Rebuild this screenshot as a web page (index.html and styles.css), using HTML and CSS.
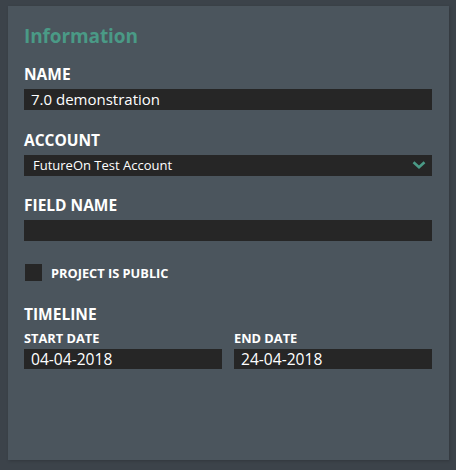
FILE: index.html
```html
<!DOCTYPE html>
<html>
<head>
<meta charset="utf-8">
<link rel="stylesheet" href="styles.css">
</head>
<body>
<div class="panel">
  <h2 class="title">Information</h2>

  <div class="field">
    <div class="label">NAME</div>
    <div class="input">7.0 demonstration</div>
  </div>

  <div class="field">
    <div class="label">ACCOUNT</div>
    <div class="input select">
      <span class="select-text">FutureOn Test Account</span>
      <svg class="chevron" width="14" height="8" viewBox="0 0 14 8"><path d="M1.5 1.2 L7 6.2 L12.5 1.2" fill="none" stroke="#4a9a86" stroke-width="2.6"/></svg>
    </div>
  </div>

  <div class="field">
    <div class="label">FIELD NAME</div>
    <div class="input"></div>
  </div>

  <div class="check-row">
    <span class="checkbox"></span>
    <span class="check-label">PROJECT IS PUBLIC</span>
  </div>

  <div class="timeline">
    <div class="label">TIMELINE</div>
    <div class="dates">
      <div class="date">
        <div class="sublabel">START DATE</div>
        <div class="input date-input">04-04-2018</div>
      </div>
      <div class="date">
        <div class="sublabel">END DATE</div>
        <div class="input date-input">24-04-2018</div>
      </div>
    </div>
  </div>
</div>
</body>
</html>
```

FILE: styles.css
```css
html, body {
  margin: 0;
  padding: 0;
  background: #3c434a;
  width: 456px;
  height: 470px;
  overflow: hidden;
}
body {
  padding: 6px 0 0 8px;
  box-sizing: border-box;
  font-family: "Open Sans", "Noto Sans", sans-serif;
  color: #ffffff;
}
.panel {
  width: 441px;
  height: 454px;
  box-sizing: border-box;
  background: #4b555d;
  padding: 18px 17px 0 16px;
  box-shadow: 1px 1px 3px rgba(0,0,0,0.18);
}
.title {
  margin: 0;
  font-size: 19px;
  line-height: 24px;
  font-weight: 700;
  color: #4a9a86;
  letter-spacing: -0.1px;
}
.field {
  margin-top: 17px;
}
.field + .field {
  margin-top: 20.5px;
}
.label {
  font-size: 15.5px;
  line-height: 18px;
  font-weight: 700;
  color: #ffffff;
}
.input {
  margin-top: 6px;
  height: 21px;
  background: #262626;
  box-sizing: border-box;
  padding: 0 7px;
  font-size: 15px;
  line-height: 21px;
  color: #ffffff;
  white-space: nowrap;
}
.select {
  display: flex;
  align-items: center;
  justify-content: space-between;
  padding: 0 6px 0 9px;
}
.select-text {
  font-size: 13px;
}
.chevron {
  display: block;
}
.check-row {
  display: flex;
  align-items: center;
  margin-top: 23px;
  padding-left: 1px;
  height: 17px;
}
.checkbox {
  width: 17px;
  height: 17px;
  background: #262626;
  display: block;
}
.check-label {
  margin-left: 9px;
  font-size: 12.8px;
  font-weight: 700;
}
.timeline {
  margin-top: 24px;
}
.dates {
  display: grid;
  grid-template-columns: 198px 198px;
  column-gap: 12px;
  margin-top: 7px;
}
.sublabel {
  font-size: 12.8px;
  line-height: 16px;
  font-weight: 700;
}
.date-input {
  margin-top: 3px;
  height: 20px;
  line-height: 20px;
  font-size: 15.6px;
}
```
